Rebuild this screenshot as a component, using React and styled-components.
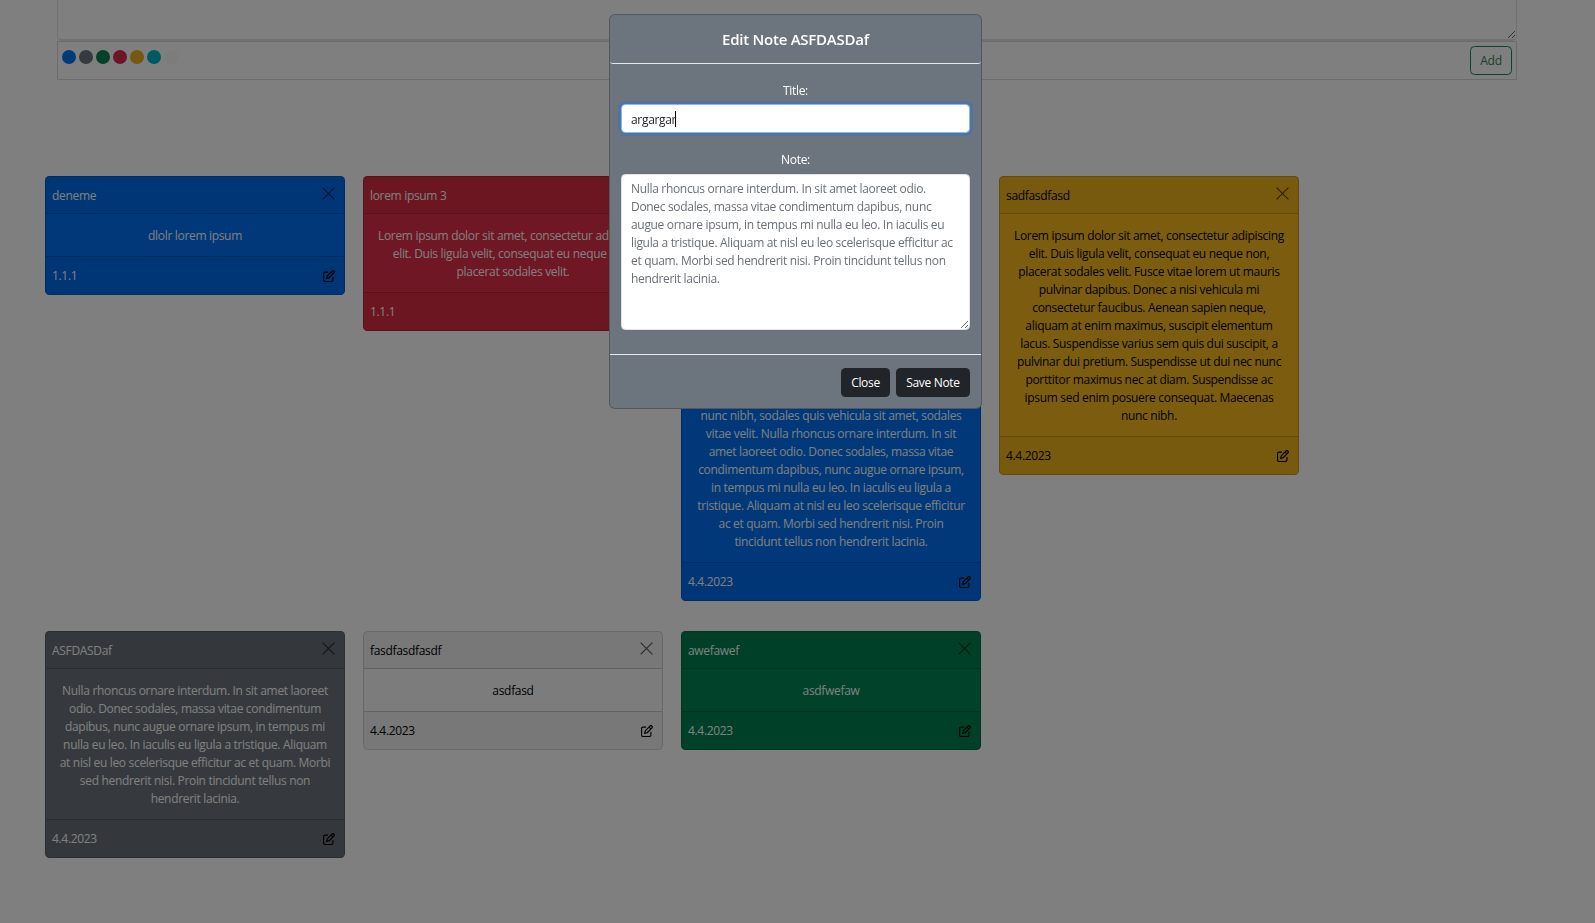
import React from "react";
import styled, { createGlobalStyle } from "styled-components";
import { FaRegPenToSquare } from "react-icons/fa6";

const Global = createGlobalStyle`
  html, body { margin: 0; padding: 0; background: #fff; overflow: hidden; }
  body { font-family: "Open Sans", "Liberation Sans", sans-serif; font-size: 12px; line-height: 18px; color: #212529; letter-spacing: -0.32px; }
  * { box-sizing: border-box; }
`;

const cardTones = {
  dark: { bg: "#6c757d", fg: "#fff" },
  primary: { bg: "#0071f2", fg: "#fff" },
  success: { bg: "#008554", fg: "#fff" },
  danger: { bg: "#df2e48", fg: "#fff" },
  warning: { bg: "#f8bb20", fg: "#000" },
  light: { bg: "#f8f9fa", fg: "#000" },
};

const Page = styled.div`
  min-height: 923px;
`;
const Composer = styled.form`
  width: 1460px;
  margin: -20px 0 0 57px;
`;
const ComposerInput = styled.textarea`
  display: block;
  width: 100%;
  height: 61px;
  border: 1px solid #dee2e6;
  border-bottom-width: 2px;
  border-radius: 0 0 5px 5px;
  background: #fff;
  outline: none;
  resize: vertical;
`;
const ComposerBar = styled.div`
  height: 39px;
  border: 1px solid #d8d9da;
  display: flex;
  justify-content: space-between;
  padding: 8px 4px 0 4px;
`;
const Dots = styled.div`
  display: flex;
  gap: 3px;
  height: 14px;
`;
const Dot = styled.span`
  width: 14px;
  height: 14px;
  border-radius: 50%;
  background: ${(p) => p.$color};
`;
const OutlineButton = styled.button`
  height: 29px;
  width: 42px;
  margin-top: -4px;
  font: inherit;
  letter-spacing: inherit;
  color: #198754;
  background: transparent;
  border: 1px solid #198754;
  border-radius: 4.5px;
  padding: 0;
`;
const Board = styled.div`
  display: grid;
  grid-template-columns: repeat(4, 300px);
  column-gap: 18px;
  row-gap: 30px;
  align-items: start;
  margin: 96px 0 0 45px;
`;
const Card = styled.article`
  border: 1px solid ${(p) => (p.$tone === "light" ? "#d0d1d2" : "rgba(0,0,0,.2)")};
  border-radius: 4.5px;
  overflow: hidden;
  background: ${(p) => cardTones[p.$tone].bg};
  color: ${(p) => cardTones[p.$tone].fg};
`;
const CardHeader = styled.header`
  height: 37px;
  border-bottom: 1px solid rgba(0, 0, 0, 0.175);
  background: rgba(0, 0, 0, 0.03);
  display: flex;
  justify-content: space-between;
  padding: 0 9px 0 6px;
`;
const CardTitle = styled.span`
  align-self: center;
  margin-top: 1px;
`;
const CloseBtn = styled.button`
  border: 0;
  padding: 0;
  margin-top: 10px;
  width: 13px;
  height: 13px;
  background: none;
  color: #000;
  opacity: 0.6;
  display: block;
  svg { display: block; }
`;
const CardBody = styled.div`
  padding: 13px 12px 11px;
  text-align: center;
`;
const Line = styled.span`
  display: block;
  white-space: nowrap;
`;
const CardFooter = styled.footer`
  height: 38px;
  border-top: 1px solid rgba(0, 0, 0, 0.175);
  background: rgba(0, 0, 0, 0.03);
  display: flex;
  align-items: center;
  justify-content: space-between;
  padding: 0 9px 0 6px;
  svg { display: block; color: #000; }
`;

const Backdrop = styled.div`
  position: fixed;
  inset: 0;
  background: rgba(0, 0, 0, 0.5);
`;
const ModalLayer = styled.div`
  position: fixed;
  inset: 0;
  display: flex;
  justify-content: center;
  align-items: flex-start;
  padding: 14px 4px 0 0;
`;
const Modal = styled.div`
  width: 373px;
  height: 395px;
  background: #6c757d;
  border: 1px solid rgba(0, 0, 0, 0.25);
  border-radius: 6px;
  color: #fff;
  display: flex;
  flex-direction: column;
`;
const ModalHeader = styled.div`
  height: 49px;
  border-bottom: 1px solid #e6e8ea;
  border-radius: 0 0 3px 3px;
  display: flex;
  align-items: center;
  justify-content: center;
`;
const ModalTitle = styled.h5`
  margin: 0;
  font-size: 15px;
  font-weight: 600;
  line-height: 18px;
  letter-spacing: -0.25px;
`;
const ModalBody = styled.div`
  flex: 1;
  padding: 18px 11px 0;
  display: flex;
  flex-direction: column;
  align-items: stretch;
`;
const FieldLabel = styled.label`
  display: block;
  text-align: center;
  height: 18px;
  margin-bottom: ${(p) => p.$gap}px;
  font-weight: 500;
`;
const InputWrap = styled.div`
  position: relative;
  margin-bottom: 18px;
`;
const TitleInput = styled.input`
  display: block;
  width: 100%;
  height: 29px;
  padding: 2px 9px 0;
  font: inherit;
  letter-spacing: inherit;
  color: #212529;
  background: #fff;
  border: 1px solid #86b7fe;
  border-radius: 4.5px;
  outline: none;
  box-shadow: 0 0 0 3px rgba(13, 110, 253, 0.25);
  caret-color: transparent;
`;
const Caret = styled.span`
  position: absolute;
  left: 54px;
  top: 7px;
  width: 1px;
  height: 16px;
  background: #000;
`;
const NoteInput = styled.textarea`
  display: block;
  width: 100%;
  height: 156px;
  padding: 5px 9px;
  font: inherit;
  letter-spacing: inherit;
  color: #6a7076;
  background: #fff;
  border: 1px solid #dee2e6;
  border-radius: 4.5px;
  outline: none;
  resize: vertical;
`;
const ModalFooter = styled.div`
  height: 54px;
  border-top: 1px solid #e6e8ea;
  display: flex;
  justify-content: flex-end;
  gap: 6px;
  padding: 13px 11px 0 0;
`;
const DarkButton = styled.button`
  height: 29px;
  width: ${(p) => p.$w}px;
  padding: 0;
  font: inherit;
  letter-spacing: inherit;
  color: #fff;
  background: #212529;
  border: 0;
  border-radius: 4.5px;
`;

const lorem = [
  "Lorem ipsum dolor sit amet, consectetur adipiscing",
  "elit. Duis ligula velit, consequat eu neque non,",
  "placerat sodales velit. Fusce vitae lorem ut mauris",
  "pulvinar dapibus. Donec a nisi vehicula mi",
  "consectetur faucibus. Aenean sapien neque,",
  "aliquam at enim maximus, suscipit elementum",
  "lacus. Suspendisse varius sem quis dui suscipit, a",
  "pulvinar dui pretium. Suspendisse ut dui nec nunc",
  "porttitor maximus nec at diam. Suspendisse ac",
  "ipsum sed enim posuere consequat. Maecenas",
];

const notes = [
  { id: 1, tone: "primary", title: "deneme", date: "1.1.1", lines: ["dlolr lorem ipsum"] },
  {
    id: 2, tone: "danger", title: "lorem ipsum 3", date: "1.1.1",
    lines: ["Lorem ipsum dolor sit amet, consectetur adipiscing", "elit. Duis ligula velit, consequat eu neque non,", "placerat sodales velit."],
  },
  {
    id: 3, tone: "primary", title: "lorem ipsum 2", date: "4.4.2023",
    lines: [
      ...lorem,
      "nunc nibh, sodales quis vehicula sit amet, sodales",
      "vitae velit. Nulla rhoncus ornare interdum. In sit",
      "amet laoreet odio. Donec sodales, massa vitae",
      "condimentum dapibus, nunc augue ornare ipsum,",
      "in tempus mi nulla eu leo. In iaculis eu ligula a",
      "tristique. Aliquam at nisl eu leo scelerisque efficitur",
      "ac et quam. Morbi sed hendrerit nisi. Proin",
      "tincidunt tellus non hendrerit lacinia.",
    ],
  },
  { id: 4, tone: "warning", title: "sadfasdfasd", date: "4.4.2023", lines: [...lorem, "nunc nibh."] },
  {
    id: 5, tone: "dark", title: "ASFDASDaf", date: "4.4.2023",
    lines: [
      "Nulla rhoncus ornare interdum. In sit amet laoreet",
      "odio. Donec sodales, massa vitae condimentum",
      "dapibus, nunc augue ornare ipsum, in tempus mi",
      "nulla eu leo. In iaculis eu ligula a tristique. Aliquam",
      "at nisl eu leo scelerisque efficitur ac et quam. Morbi",
      "sed hendrerit nisi. Proin tincidunt tellus non",
      "hendrerit lacinia.",
    ],
  },
  { id: 6, tone: "light", title: "fasdfasdfasdf", date: "4.4.2023", lines: ["asdfasd"] },
  { id: 7, tone: "success", title: "awefawef", date: "4.4.2023", lines: ["asdfwefaw"] },
];

const dots = ["#0572f6", "#6c757d", "#008555", "#dc2a48", "#f0b020", "#00b4c8", "#f8f9fa"];

const CloseIcon = () => (
  <svg width="13" height="13" viewBox="0 0 13 13" fill="none" stroke="currentColor" strokeWidth="1.3">
    <path d="M0.6 0.6 L12.4 12.4 M12.4 0.6 L0.6 12.4" />
  </svg>
);

const noteText =
  "Nulla rhoncus ornare interdum. In sit amet laoreet odio. Donec sodales, massa vitae condimentum dapibus, nunc augue ornare ipsum, in tempus mi nulla eu leo. In iaculis eu ligula a tristique. Aliquam at nisl eu leo scelerisque efficitur ac et quam. Morbi sed hendrerit nisi. Proin tincidunt tellus non hendrerit lacinia.";

export default function App() {
  return (
    <Page>
      <Global />
      <Composer>
        <ComposerInput readOnly defaultValue="" />
        <ComposerBar>
          <Dots>
            {dots.map((c) => (
              <Dot key={c} $color={c} />
            ))}
          </Dots>
          <OutlineButton type="button">Add</OutlineButton>
        </ComposerBar>
      </Composer>
      <Board>
        {notes.map((n) => (
          <Card key={n.id} $tone={n.tone}>
            <CardHeader>
              <CardTitle>{n.title}</CardTitle>
              <CloseBtn type="button" aria-label="Close"><CloseIcon /></CloseBtn>
            </CardHeader>
            <CardBody>
              {n.lines.map((l) => (
                <Line key={l}>{l}</Line>
              ))}
            </CardBody>
            <CardFooter>
              <span>{n.date}</span>
              <FaRegPenToSquare size={12} />
            </CardFooter>
          </Card>
        ))}
      </Board>
      <Backdrop />
      <ModalLayer>
        <Modal>
          <ModalHeader>
            <ModalTitle>Edit Note ASFDASDaf</ModalTitle>
          </ModalHeader>
          <ModalBody>
            <FieldLabel $gap={4}>Title:</FieldLabel>
            <InputWrap>
              <TitleInput readOnly value="argargar" />
              <Caret />
            </InputWrap>
            <FieldLabel $gap={5}>Note:</FieldLabel>
            <NoteInput readOnly value={noteText} />
          </ModalBody>
          <ModalFooter>
            <DarkButton type="button" $w={49}>Close</DarkButton>
            <DarkButton type="button" $w={74}>Save Note</DarkButton>
          </ModalFooter>
        </Modal>
      </ModalLayer>
    </Page>
  );
}
